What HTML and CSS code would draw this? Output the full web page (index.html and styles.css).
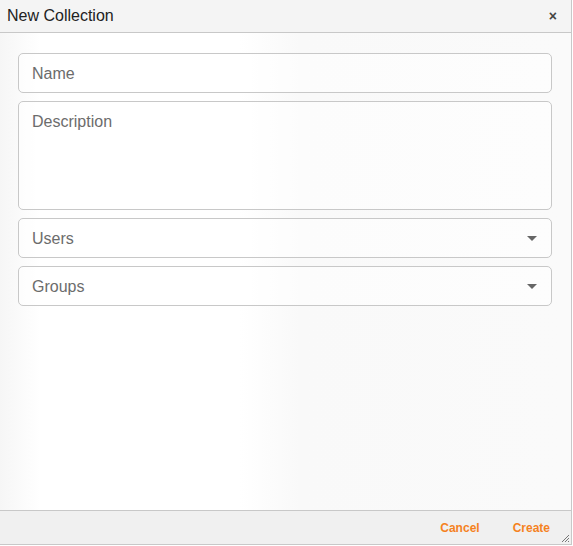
FILE: index.html
```html
<!DOCTYPE html>
<html>
<head>
<meta charset="utf-8">
<link rel="stylesheet" href="styles.css">
</head>
<body>
<div class="dialog">
  <div class="header">
    <span class="title">New Collection</span>
    <span class="close">×</span>
  </div>
  <div class="content">
    <div class="field"><span class="ph">Name</span></div>
    <div class="field area"><span class="ph">Description</span></div>
    <div class="field select"><span class="ph">Users</span><span class="caret"></span></div>
    <div class="field select"><span class="ph">Groups</span><span class="caret"></span></div>
  </div>
  <div class="footer">
    <span class="btn">Cancel</span>
    <span class="btn">Create</span>
    <svg class="grip" width="10" height="10" viewBox="0 0 10 10"><path d="M9 2 L2 9 M9 5 L5 9 M9 8 L8 9" stroke="#777" stroke-width="1"/></svg>
  </div>
</div>
</body>
</html>
```
FILE: styles.css
```css
html, body { margin: 0; padding: 0; background: #ffffff; }
body { font-family: "Liberation Sans", Arial, sans-serif; }
.dialog {
  width: 571px;
  height: 544px;
  border-right: 1px solid #c8c8c8;
  border-bottom: 1px solid #c8c8c8;
  display: flex;
  flex-direction: column;
  background: #fbfbfb;
  position: relative;
}
.header {
  height: 32px;
  border-bottom: 1px solid #c8c8c8;
  background: #f4f4f4;
  display: flex;
  align-items: center;
  justify-content: space-between;
  padding: 0 14px 0 7px;
}
.title { font-size: 16px; color: #222; }
.close { font-size: 14px; font-weight: bold; color: #444; }
.content {
  flex: 1;
  padding: 20px 19px 0 18px;
  display: flex;
  flex-direction: column;
  gap: 8px;
  background: linear-gradient(90deg, #f6f6f6 0px, #ffffff 40px, #ffffff 240px, #f9f9f9 300px, #fafafa 560px);
}
.field {
  height: 40px;
  box-sizing: border-box;
  border: 1px solid #c8c8c8;
  border-radius: 5px;
  display: flex;
  align-items: center;
  padding: 1px 14px 0 13px;
  background: rgba(255,255,255,0.5);
}
.area { height: 109px; align-items: flex-start; padding-top: 11px; }
.ph { font-size: 16px; color: #6c6c6c; }
.select { justify-content: space-between; }
.caret {
  width: 0; height: 0;
  border-left: 5px solid transparent;
  border-right: 5px solid transparent;
  border-top: 5px solid #666;
}
.footer {
  height: 33px;
  border-top: 1px solid #c8c8c8;
  background: #f0f0f0;
  display: flex;
  align-items: center;
  justify-content: flex-end;
  gap: 33px;
  padding-right: 21px;
}
.btn { font-size: 12px; font-weight: bold; color: #f5821f; }
.grip { position: absolute; right: 1px; bottom: 1px; }
```
